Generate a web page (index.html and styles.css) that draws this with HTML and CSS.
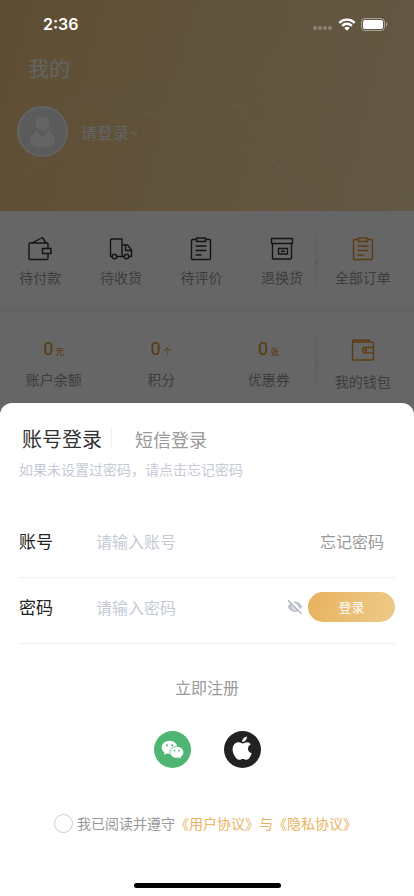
FILE: index.html
```html
<!DOCTYPE html>
<html lang="zh-CN">
<head>
<meta charset="utf-8">
<meta name="viewport" content="width=device-width, initial-scale=1">
<title>我的</title>
<link rel="stylesheet" href="styles.css">
</head>
<body>
<div class="screen">
  <div class="profile-page">
    <header class="hero">
      <svg class="hero-waves" viewBox="0 0 414 211" preserveAspectRatio="none" aria-hidden="true">
        <g fill="none" stroke="#fff">
          <path stroke-opacity=".16" d="M10 184C45 160 85 128 130 116S205 122 235 102"/>
          <path stroke-opacity=".2" d="M60 112C75 92 95 97 125 91C165 84 205 76 225 92C245 106 262 150 275 163S290 182 300 200"/>
          <path stroke-opacity=".16" d="M95 96C125 97 145 112 168 120C205 134 245 146 275 162S300 185 325 211"/>
          <path stroke-opacity=".22" d="M230 104C245 104 250 122 262 142S285 180 298 196"/>
          <path stroke-opacity=".08" d="M165 120C195 118 210 108 240 105S300 60 350 40S400 12 414 8"/>
          <path stroke-opacity=".08" d="M240 90C280 80 310 70 320 110S340 180 370 211M245 84C295 66 325 70 332 105S350 180 384 211M250 78C305 54 340 62 346 100S364 176 398 211M256 72C318 42 352 54 360 95S380 172 408 211M260 66C325 32 366 45 374 90S396 170 414 200M265 60C335 20 380 35 388 85S404 160 414 182"/>
          <path stroke-opacity=".08" d="M70 106C95 94 120 100 150 116M75 112C100 98 125 104 155 117M130 92C160 94 190 104 215 110M150 88C180 90 205 98 232 104M170 84C200 86 220 94 240 110"/>
        </g>
      </svg>
      <h1 class="hero-title">我的</h1>
      <div class="user">
        <svg class="avatar" viewBox="0 0 52 52" aria-hidden="true">
          <circle cx="26" cy="26" r="25" fill="#e3e3e3" stroke="#f6f8fb" stroke-width="2"/>
          <circle cx="26" cy="18" r="7" fill="#fbfbfb"/>
          <path fill="#fbfbfb" d="M20 25l6 8 6-8c4 3 7 7 7 13-3 3-8 4-13 4s-10-1-13-4c0-6 3-10 7-13z"/>
        </svg>
        <span class="user-name">请登录~</span>
      </div>
    </header>

    <nav class="tiles">
      <a class="tile" href="#"><svg class="icon" viewBox="0 0 26 26" aria-hidden="true"><path d="M21 18v4.500q0 1-1 1H3q-1 0-1-1V8q0-1 1-1h17q1 0 1 1v4.500M5 7l10.500-5.500 3.500 5.500M15.500 12.500h8.500v5h-8.500z"/></svg><span>待付款</span></a>
      <a class="tile" href="#"><svg class="icon" viewBox="0 0 26 26" aria-hidden="true"><path d="M4 20.500H2.500V4q0-1 1-1H14v17.500H9M14 9h5.500l4 5v6.500H21M14 20.500h2M17.500 9v5.500h6"/><circle cx="6.500" cy="20.500" r="2.300"/><circle cx="18.500" cy="20.500" r="2.300"/></svg><span>待收货</span></a>
      <a class="tile" href="#"><svg class="icon" viewBox="0 0 26 26" aria-hidden="true"><path d="M8.500 3.500H4.500q-1 0-1 1v18q0 1 1 1h17q1 0 1-1v-18q0-1-1-1h-4M8.500 2h9v3.500h-9zM7.500 10h11M7.500 14.500h11M7.500 19h6"/></svg><span>待评价</span></a>
      <a class="tile" href="#"><svg class="icon" viewBox="0 0 26 26" aria-hidden="true"><path d="M2.500 2.500h21v5h-21zM3.500 7.500v14.500q0 1 1 1h17q1 0 1-1V7.500M9.500 12.500h9v5.500h-9zM12 15.300h4"/></svg><span>退换货</span></a>
      <a class="tile tile-more" href="#"><svg class="icon icon-gold" viewBox="0 0 26 26" aria-hidden="true"><path d="M8.500 3.500H4.500q-1 0-1 1v18q0 1 1 1h17q1 0 1-1v-18q0-1-1-1h-4M8.500 2h9v3.500h-9zM7.500 10h11M7.500 14.500h11M7.500 19h6"/></svg><span>全部订单</span></a>
    </nav>

    <nav class="tiles assets">
      <div class="asset-group">
        <a class="asset" href="#"><span class="amount">0<small>元</small></span><span>账户余额</span></a>
        <a class="asset" href="#"><span class="amount">0<small>个</small></span><span>积分</span></a>
        <a class="asset" href="#"><span class="amount">0<small>张</small></span><span>优惠券</span></a>
      </div>
      <a class="tile tile-more" href="#"><svg class="icon icon-gold" viewBox="0 0 26 26" aria-hidden="true"><path d="M23.500 10V6.500q0-1.500-1.500-1.500H3.500Q2.500 5 2.500 4T3.500 3H18.500q1 0 1 1v1M2.500 4v17.500q0 1.500 1.500 1.500h18q1.500 0 1.500-1.500V16M23.500 10.500h-8q-3 0-3 2.700t3 2.700h8z"/><circle cx="15.800" cy="13.200" r=".8"/></svg><span>我的钱包</span></a>
    </nav>
  </div>

  <div class="mask"></div>

  <div class="status-bar">
    <span class="time">2:36</span>
    <div class="status-icons">
      <svg width="20" height="6" viewBox="0 0 20 6" fill="#fff" fill-opacity=".28" aria-hidden="true"><circle cx="2" cy="3" r="2"/><circle cx="7" cy="3" r="2"/><circle cx="12" cy="3" r="2"/><circle cx="17" cy="3" r="2"/></svg>
      <svg class="wifi" width="18" height="13" viewBox="0 0 18 13" fill="none" stroke="#fff" stroke-width="2.400" aria-hidden="true"><path d="M1.300 4.800a11 11 0 0 1 15.400 0M4.200 7.800a6.800 6.800 0 0 1 9.600 0"/><path fill="#fff" stroke="none" d="M9 12.800L6.300 10a3.800 3.800 0 0 1 5.400 0z"/></svg>
      <svg class="battery" width="27" height="13" viewBox="0 0 27 13" aria-hidden="true"><rect x=".5" y=".5" width="23" height="12" rx="3.500" fill="none" stroke="#fff" stroke-opacity=".45"/><rect x="2" y="2" width="20" height="9" rx="2" fill="#fff"/><path fill="#fff" fill-opacity=".5" d="M25 4.500c1.800.8 1.800 3.200 0 4z"/></svg>
    </div>
  </div>

  <form class="sheet">
    <div class="tabs">
      <button class="tab tab-active" type="button">账号登录</button>
      <button class="tab" type="button">短信登录</button>
    </div>
    <p class="hint">如果未设置过密码，请点击忘记密码</p>
    <div class="field">
      <label for="account">账号</label>
      <input id="account" type="text" placeholder="请输入账号">
      <a class="forgot" href="#">忘记密码</a>
    </div>
    <div class="field">
      <label for="password">密码</label>
      <input id="password" type="password" placeholder="请输入密码">
      <button class="eye" type="button" aria-label="显示密码">
        <svg width="16" height="16" viewBox="0 0 16 16" aria-hidden="true"><path fill="#bfc3ce" d="M8 2.500c3.500 0 6 2.200 7.200 5.300C14 11 11.500 13 8 13S2 11 .8 7.800C2 4.700 4.500 2.500 8 2.500z"/><circle cx="8" cy="7.800" r="2.600" fill="#bfc3ce" stroke="#fff" stroke-width="1"/><path stroke="#fff" stroke-width="2.800" d="M2.300 .8l13 13"/><path stroke="#b4b8c4" stroke-width="1.600" stroke-linecap="round" d="M1.500 1.800l12.500 12.500"/></svg>
      </button>
      <button class="login" type="submit">登录</button>
    </div>
    <a class="register" href="#">立即注册</a>
    <div class="socials">
      <button class="social" type="button" aria-label="微信登录">
        <svg viewBox="0 0 37 37" aria-hidden="true"><circle cx="18.500" cy="18.500" r="18.500" fill="#4fb573"/><path fill="#fff" d="M15.500 9.800c-4.300 0-7.800 2.900-7.800 6.600 0 2.100 1.100 3.900 2.900 5.100l-.7 2.400 2.700-1.400c.9.300 1.900.5 2.900.5 4.300 0 7.800-2.900 7.800-6.600s-3.500-6.600-7.800-6.600z"/><path fill="#fff" stroke="#4fb573" stroke-width=".8" d="M22.800 15.400c-3.900 0-6.900 2.600-6.900 5.900s3 5.900 6.900 5.900c.8 0 1.600-.1 2.300-.3l2.400 1.300-.6-2.100c1.700-1.100 2.800-2.800 2.800-4.800 0-3.300-3-5.900-6.900-5.900z"/><g fill="#4fb573"><circle cx="12.900" cy="14.300" r="1.100"/><circle cx="18.200" cy="14.300" r="1.100"/><circle cx="20.500" cy="19.600" r=".9"/><circle cx="25" cy="19.600" r=".9"/></g></svg>
      </button>
      <button class="social" type="button" aria-label="Apple 登录">
        <svg viewBox="0 0 37 37" aria-hidden="true"><circle cx="18.500" cy="18.500" r="18.500" fill="#222"/><path fill="#fff" d="M26.600 13.500c-1.700 1-2.600 2.400-2.600 4.200 0 2.100 1.200 3.700 3.700 4.600-.8 2.800-2.900 6.500-5.300 6.500-1.300 0-1.900-.8-3.500-.8s-2.400.8-3.500.8c-3 0-6.800-5.800-6.800-10.400 0-4.500 2.900-7.100 5.900-7.100 1.800 0 3.100 1.100 4.300 1.100s2.700-1.200 4.800-1.200c1.300 0 2.400.9 3 2.300zM18.200 11.100c-.2-2.600 1.900-5.100 4.700-5.500.4 2.700-1.900 5.500-4.700 5.500z"/></svg>
      </button>
    </div>
    <div class="agreement">
      <input id="agree" type="checkbox">
      <label for="agree">我已阅读并遵守</label><a href="#">《用户协议》与《隐私协议》</a>
    </div>
    <div class="home-indicator"></div>
  </form>
</div>
</body>
</html>
```

FILE: styles.css
```css
* {
  box-sizing: border-box;
}

body {
  margin: 0;
  font-family: "Noto Sans CJK SC", sans-serif;
  font-size: 14px;
  line-height: 20px;
  color: #999;
}

a {
  color: inherit;
  text-decoration: none;
}

button,
input {
  font: inherit;
  color: inherit;
  border: 0;
  padding: 0;
  background: none;
}

.screen {
  position: relative;
  min-height: 100vh;
  overflow: hidden;
}

/* Profile page behind the sheet */
.hero {
  position: relative;
  padding: 52px 17px 54px;
  background: linear-gradient(105deg, #ecc281 0%, #f2d094 45%, #f8dcab 100%);
  color: #f6f9ff;
}

.hero-waves {
  position: absolute;
  inset: 0;
  width: 100%;
  height: 100%;
}

.hero-title {
  position: relative;
  margin: 0 0 24px 11px;
  font-size: 21px;
  font-weight: 400;
  line-height: 30px;
}

.user {
  position: relative;
  display: flex;
  align-items: center;
  gap: 13px;
}

.avatar {
  width: 51px;
  height: 51px;
}

.user-name {
  font-size: 16px;
}

.tiles {
  display: grid;
  grid-template-columns: repeat(5, 1fr);
  padding: 25px 11px 21px 0;
  border-bottom: 5px solid #f4f4f4;
}

.tile,
.asset {
  display: flex;
  flex-direction: column;
  align-items: center;
  gap: 5px;
}

.tile-more {
  position: relative;
}

.tile-more::before {
  content: "";
  position: absolute;
  left: -7px;
  top: 0;
  width: 4px;
  height: 50px;
  background: linear-gradient(90deg, #f0f0f0, transparent);
}

.tile-more::after {
  content: "";
  position: absolute;
  left: -7px;
  top: 22px;
  border: 4px solid transparent;
  border-left-color: #e6e6e6;
}

.icon {
  width: 26px;
  height: 26px;
  fill: none;
  stroke: #333;
  stroke-width: 1.400;
  stroke-linejoin: round;
}

.icon-gold {
  stroke: #e5942f;
}

.assets {
  padding-top: 24px;
}

.assets .tile {
  gap: 8px;
}

.asset-group {
  grid-column: span 4;
  display: grid;
  grid-template-columns: repeat(3, 1fr);
}

.amount {
  font-family: Roboto, "Noto Sans CJK SC", sans-serif;
  font-size: 18px;
  line-height: 24px;
  color: #d9941f;
}

.amount small {
  margin-left: 2px;
  font-size: 9px;
}

.mask {
  position: absolute;
  inset: 0;
  background: rgba(0, 0, 0, 0.6);
}

.status-bar {
  position: absolute;
  top: 0;
  left: 0;
  right: 0;
  height: 48px;
  padding: 0 26px 0 43px;
  display: flex;
  align-items: center;
  justify-content: space-between;
  color: #fff;
}

.time {
  font-family: Inter, sans-serif;
  font-size: 16px;
  font-weight: 600;
}

.status-icons {
  display: flex;
  align-items: center;
  gap: 5px;
}

.status-icons svg:first-child {
  align-self: flex-end;
}

/* Login sheet */
.sheet {
  position: absolute;
  left: 0;
  right: 0;
  bottom: 0;
  display: flex;
  flex-direction: column;
  padding: 22px 19px 8px;
  border-radius: 12px 12px 0 0;
  background: #fff;
}

.tabs {
  display: flex;
  align-items: center;
  height: 28px;
  padding-left: 3px;
}

.tab {
  font-size: 18px;
  color: #999;
}

.tab-active {
  font-size: 20px;
  color: #333;
}

.tab + .tab {
  margin-left: 9px;
  padding-left: 23px;
  border-left: 1px solid #eee;
}

.hint {
  margin: 6px 0 33px;
  color: #c5c9d5;
}

.field {
  display: flex;
  align-items: center;
  height: 66px;
  padding-bottom: 8px;
  border-bottom: 1px solid #f0f0f0;
  font-size: 16px;
}

.field label {
  width: 77px;
  font-size: 17px;
  color: #222;
}

.field input {
  flex: 1;
  min-width: 0;
  color: #333;
  outline: 0;
}

.field input::placeholder {
  color: #c5c9d5;
  opacity: 1;
}

.forgot {
  margin-right: 11px;
}

.eye {
  display: flex;
  margin-right: 5px;
}

.login {
  width: 87px;
  height: 30px;
  border-radius: 15px;
  background: linear-gradient(100deg, #e8b260, #edca87);
  color: #fff;
  font-size: 13px;
}

.register {
  align-self: center;
  margin: 31px 0 32px;
  font-size: 16px;
  line-height: 24px;
}

.socials {
  display: flex;
  justify-content: center;
  gap: 33px;
}

.social {
  width: 37px;
  height: 37px;
}

.social svg {
  display: block;
}

.agreement {
  display: flex;
  align-items: center;
  height: 20px;
  margin: 45px 0 50px;
  padding-left: 35px;
}

.agreement input {
  appearance: none;
  width: 19px;
  height: 19px;
  margin: 0 4px 0 0;
  border: 1px solid #ccc;
  border-radius: 50%;
}

.agreement a {
  color: #e8b260;
}

.home-indicator {
  align-self: center;
  width: 147px;
  height: 5px;
  border-radius: 3px;
  background: #000;
}
```
